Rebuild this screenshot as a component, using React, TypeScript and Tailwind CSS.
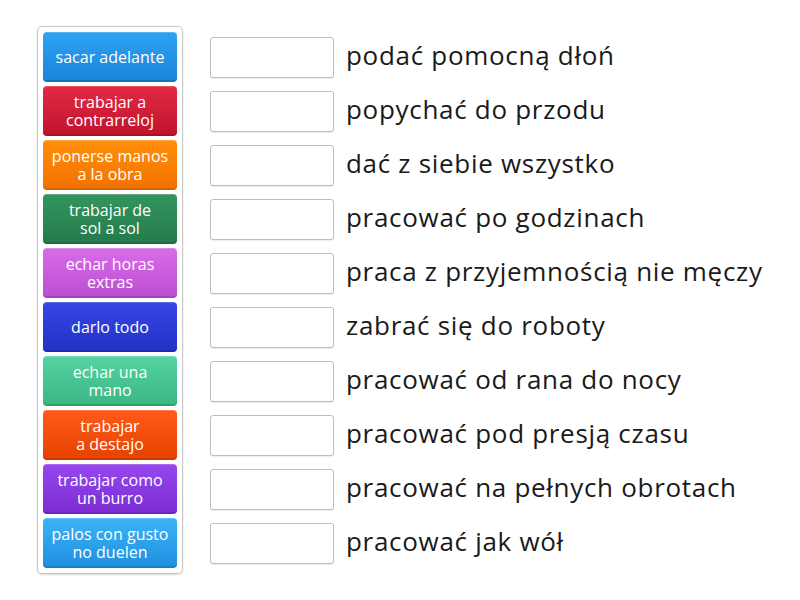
import React from "react";

const tiles: { label: React.ReactNode; cls: string }[] = [
  { label: "sacar adelante", cls: "bg-linear-to-b from-[#2ea3f2] to-[#1a82da]" },
  { label: <>trabajar a<br />contrarreloj</>, cls: "bg-linear-to-b from-[#e02a45] to-[#c2112e]" },
  { label: <>ponerse manos<br />a la obra</>, cls: "bg-linear-to-b from-[#ff8f0a] to-[#f27200]" },
  { label: <>trabajar de<br />sol a sol</>, cls: "bg-linear-to-b from-[#34955f] to-[#237a4b]" },
  { label: <>echar horas<br />extras</>, cls: "bg-linear-to-b from-[#d96ce8] to-[#bb4dd2]" },
  { label: "darlo todo", cls: "bg-linear-to-b from-[#3546e6] to-[#2232c4]" },
  { label: <>echar una<br />mano</>, cls: "bg-linear-to-b from-[#55d3a0] to-[#38b684]" },
  { label: <>trabajar<br />a destajo</>, cls: "bg-linear-to-b from-[#ff5a18] to-[#e64100]" },
  { label: <>trabajar como<br />un burro</>, cls: "bg-linear-to-b from-[#9747ee] to-[#7a2cd2]" },
  { label: <>palos con gusto<br />no duelen</>, cls: "bg-linear-to-b from-[#3cb3f6] to-[#1d8fe0]" },
];

const phrases = [
  "podać pomocną dłoń",
  "popychać do przodu",
  "dać z siebie wszystko",
  "pracować po godzinach",
  "praca z przyjemnością nie męczy",
  "zabrać się do roboty",
  "pracować od rana do nocy",
  "pracować pod presją czasu",
  "pracować na pełnych obrotach",
  "pracować jak wół",
];

export default function App() {
  return (
    <div
      className="w-[800px] h-[600px] bg-white flex items-start pt-[26px] pl-[37px]"
      style={{ fontFamily: '"Open Sans", "Noto Sans", sans-serif' }}
    >
      <div className="w-[146px] border border-[#c8c8c8] rounded-[5px] px-[5px] pt-[5px] pb-[5px] flex flex-col gap-[4px] shadow-[0_1px_2px_rgba(0,0,0,0.15)]">
        {tiles.map((t, i) => (
          <div
            key={i}
            className={`h-[50px] rounded-[4px] flex items-center justify-center text-center text-white text-[16px] font-medium leading-[18px] shadow-[inset_0_-2px_0_rgba(0,0,0,0.12),inset_0_1px_0_rgba(255,255,255,0.2)] ${t.cls}`}
          >
            <span>{t.label}</span>
          </div>
        ))}
      </div>
      <div className="ml-[27px] pt-[6px] flex flex-col gap-[4px]">
        {phrases.map((p, i) => (
          <div key={i} className="h-[50px] flex items-center">
            <div className="w-[124px] h-[41px] border border-[#bdbdbd] rounded-[3px] bg-white shadow-[0_1px_1px_rgba(0,0,0,0.08)]" />
            <span className="ml-[12px] text-[26px] tracking-[0.7px] text-[#1a1a1a] leading-none -mt-[4px]">{p}</span>
          </div>
        ))}
      </div>
    </div>
  );
}
